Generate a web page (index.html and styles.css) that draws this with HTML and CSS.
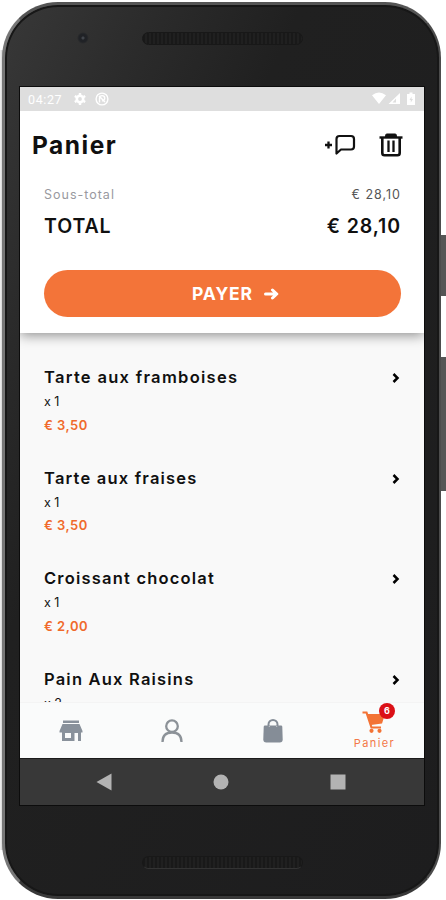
FILE: index.html
```html
<!DOCTYPE html>
<html lang="fr">
<head>
<meta charset="utf-8">
<title>Panier</title>
<link rel="stylesheet" href="styles.css">
</head>
<body>
<div class="device">
  <span class="key key-power"></span>
  <span class="key key-volume"></span>
  <div class="phone">
    <div class="bezel bezel-top"><span class="camera"></span><span class="speaker"></span></div>
    <main class="screen">
      <div class="status">
        <span class="clock">04:27</span>
        <svg class="gear" width="12" height="12" viewBox="0 0 12 12"><circle cx="6" cy="6" r="3.2" fill="none" stroke="#fff" stroke-width="2.6"/><path d="M6 0v2M6 10v2M.8 3l1.7 1M9.5 8l1.7 1M.8 9l1.7-1M9.5 4l1.7-1" stroke="#fff" stroke-width="2.4"/></svg>
        <svg class="disc" width="14" height="14" viewBox="0 0 14 14" fill="none" stroke="#fff"><circle cx="7" cy="7" r="5.9" stroke-width="1.4"/><path d="M4.5 10.5V6.2a2.6 2.6 0 1 1 2.6 2.6M4 4l6 6" stroke-width="1.4"/></svg>
        <svg class="signals" width="44" height="14" viewBox="0 0 44 14" fill="#fff"><path d="M0 3.2Q7-2 14 3.2L7 12zM28 1v11H16.500z"/><path d="M24 6.500v4h-3.500z" fill="#dedede"/><path d="M36 2h1.500V.5h3V2H43v11h-8V2z"/><path d="M39.500 4.500 37.500 8h1.300v2.500L41 7h-1.500z" fill="#dedede"/></svg>
      </div>
      <header class="summary">
        <div class="titlebar">
          <h1>Panier</h1>
          <svg class="note" width="32" height="22" viewBox="0 0 32 22" fill="none" stroke="#111"><path d="M1 11h7M4.500 7.500v7" stroke-width="2.300"/><path d="M12.500 19.500V5q0-3 3-3H27q3 0 3 3v7.500q0 3-3 3H17z" stroke-width="2.200" stroke-linejoin="round"/></svg>
          <svg class="trash" width="24" height="24" viewBox="0 0 24 24" fill="none" stroke="#111"><path d="M.5 4.500h23" stroke-width="2.400"/><path d="M6.500 4V2.500Q6.500 1 8 1h8q1.500 0 1.500 1.500V4z" fill="#111"/><path d="M3.300 5v15q0 2.200 2.200 2.200h13q2.200 0 2.200-2.200V5" stroke-width="2.600"/><path d="M9.500 7.500v11.500M14.500 7.500v11.500" stroke-width="2.300"/></svg>
        </div>
        <div class="line subtotal"><span>Sous-total</span><span class="amount">€ 28,10</span></div>
        <div class="line total"><span>TOTAL</span><span class="amount">€ 28,10</span></div>
        <button class="pay"><span>PAYER</span><svg width="15" height="12" viewBox="0 0 15 12" fill="none" stroke="#fff" stroke-width="3" stroke-linecap="round" stroke-linejoin="round"><path d="M1.500 6h11M8.500 2 12.800 6l-4.300 4"/></svg></button>
      </header>
      <section class="list">
        <article class="item"><h2 class="n1">Tarte aux framboises</h2><p class="qty">x 1</p><p class="price">€ 3,50</p><svg class="chev" width="8" height="12" viewBox="0 0 8 12"><path d="m1.500 2 4 4-4 4" fill="none" stroke="#000" stroke-width="2.500"/></svg></article>
        <article class="item"><h2 class="n2">Tarte aux fraises</h2><p class="qty">x 1</p><p class="price">€ 3,50</p><svg class="chev" width="8" height="12" viewBox="0 0 8 12"><path d="m1.500 2 4 4-4 4" fill="none" stroke="#000" stroke-width="2.500"/></svg></article>
        <article class="item"><h2 class="n3">Croissant chocolat</h2><p class="qty">x 1</p><p class="price">€ 2,00</p><svg class="chev" width="8" height="12" viewBox="0 0 8 12"><path d="m1.500 2 4 4-4 4" fill="none" stroke="#000" stroke-width="2.500"/></svg></article>
        <article class="item"><h2 class="n4">Pain Aux Raisins</h2><p class="qty">x 2</p><svg class="chev" width="8" height="12" viewBox="0 0 8 12"><path d="m1.500 2 4 4-4 4" fill="none" stroke="#000" stroke-width="2.500"/></svg></article>
      </section>
      <nav class="tabs">
        <span class="tab"><svg width="24" height="22" viewBox="0 0 24 22" fill="#89919b"><path d="M4 .5h16V3H4zM3.500 4h17l3 7v1.500H22V21h-3v-8h-3.500v8H3v-8.500H.5V11zM6 13v5h6v-5z" fill-rule="evenodd"/></svg></span>
        <span class="tab"><svg width="22" height="24" viewBox="0 0 22 24" fill="none" stroke="#8c9298" stroke-width="2.300"><circle cx="11" cy="7.200" r="5.800"/><path d="M1.500 23q0-9.500 9.500-9.500T20.500 23"/></svg></span>
        <span class="tab"><svg width="20" height="24" viewBox="0 0 20 24"><path d="M5.500 8V5.500a4.500 4.500 0 0 1 9 0V8" fill="none" stroke="#858d97" stroke-width="2"/><path d="M2 6.500h16q1.200 0 1.300 1.300l.4 12.700q0 3-3 3H3.300q-3 0-3-3L.7 7.800Q.8 6.500 2 6.500z" fill="#858d97"/><path d="M6.300 7v1M13.700 7v1" stroke="#c3c8cd"/></svg></span>
        <span class="tab active"><span class="cart"><svg width="24" height="22" viewBox="0 0 24 22"><path d="M.5 1.500h4L9.500 16.500h9.500" fill="none" stroke="#f37335" stroke-width="2.200"/><path d="M5.500 3H23l-3 9.500-11 1.500z" fill="#f37335"/><circle cx="9.500" cy="19.800" r="2.100" fill="#f37335"/><circle cx="17.500" cy="19.800" r="2.100" fill="#f37335"/></svg><span class="badge">6</span></span><span class="label">Panier</span></span>
      </nav>
      <div class="system">
        <svg width="16" height="18" viewBox="0 0 16 18"><path d="M15.500.5v17L.5 9z" fill="#b3b3b3"/></svg>
        <svg width="16" height="16" viewBox="0 0 16 16"><circle cx="8" cy="8" r="7.500" fill="#b3b3b3"/></svg>
        <svg width="16" height="16" viewBox="0 0 16 16"><path d="M.5.500h15v15H.5z" fill="#b3b3b3"/></svg>
      </div>
    </main>
    <div class="bezel bezel-bottom"><span class="speaker"></span></div>
  </div>
</div>
</body>
</html>
```
FILE: styles.css
```css
* { box-sizing: border-box; }
body { margin: 0; background: #fff; font-family: Inter, "Liberation Sans", sans-serif; color: #101010; }
h1, h2, p { margin: 0; white-space: nowrap; }
svg { display: block; flex: none; }
.device { position: relative; width: 446px; height: 900px; padding: 2px 5px 1px 2px; overflow: hidden; background: linear-gradient(90deg, #f4f4f4 0, #b5b5b5 4px, transparent 5px) 0 50px / 7px 800px no-repeat; }
.key { position: absolute; right: 0; width: 6px; background: #555; }
.key-power { top: 235px; height: 61px; }
.key-volume { top: 357px; height: 134px; }
.phone { position: relative; height: 897px; border-radius: 56px; padding: 0 14px 0 14px; border: 3px solid #4c4c4c; border-top-color: #555; border-left-color: #777; border-right-width: 2px; border-bottom-color: #393939; background: linear-gradient(115deg, #383838 0, #2b2b2b 18%, #202020 35%, #1d1d1e 100%); box-shadow: inset 0 0 0 2px #171717; }
.bezel { display: flex; position: relative; justify-content: center; }
.bezel-top { height: 82px; padding-top: 27px; }
.bezel-bottom { height: 91px; padding-top: 51px; }
.speaker { width: 161px; height: 13px; border-radius: 7px; border: 1px solid #181818; background: repeating-linear-gradient(90deg, #191919 0 2px, #202020 2px 4px); }
.bezel-bottom .speaker { border-bottom-color: #333; }
.camera { position: absolute; left: 58px; top: 27px; width: 12px; height: 12px; border-radius: 50%; background: radial-gradient(circle, #41454b 0 1px, #202226 2px 4px, #303030 6px); }
.screen { display: flex; flex-direction: column; width: 404px; margin-left: 1px; height: 718px; background: #f9f9f9; outline: 1px solid #0c0c0c; overflow: hidden; }
.status { position: relative; z-index: 2; display: flex; align-items: center; flex: none; height: 24px; background: #dedede; padding: 0 8px; }
.clock { width: 46px; font: 12.5px Roboto, sans-serif; letter-spacing: .6px; color: #fff; }
.disc { margin-left: 9px; }
.signals { margin-left: auto; }
.summary { position: relative; z-index: 1; flex: none; height: 222px; padding: 0 24px; background: #fff; box-shadow: 0 2px 12px rgba(0,0,0,.45); }
.titlebar { display: flex; align-items: center; height: 68px; margin: 0 -3px 0 -12px; }
h1 { font-size: 24.5px; font-weight: 700; letter-spacing: 1.5px; }
.note { margin-left: auto; margin-right: 23px; }
.line { display: flex; justify-content: space-between; align-items: center; white-space: nowrap; }
.subtotal { height: 30px; font-size: 12.5px; letter-spacing: 1px; color: #9999a0; }
.amount { margin-right: -1px; }
.subtotal .amount { color: #555; }
.total { height: 33px; font-size: 19.5px; font-weight: 600; letter-spacing: .9px; }
.pay { display: flex; align-items: center; justify-content: center; gap: 11px; width: 357px; height: 47px; margin-top: 28px; border: 0; border-radius: 24px; padding: 0 0 0 26px; color: #fff; background: #f37439; font: 700 17.5px Inter, sans-serif; letter-spacing: .9px; }
.list { flex: 1; min-height: 0; overflow: hidden; padding: 32px 24px 0; }
.item { display: grid; grid-template-columns: 1fr 8px; grid-template-rows: 24px 25px 21px; height: 100.5px; align-items: center; }
.item .chev { grid-column: 2; grid-row: 1; position: relative; top: 1px; }
h2 { font-size: 16.5px; font-weight: 600; letter-spacing: 1.2px; }
.n1 { letter-spacing: 1.3px; }
.item p { grid-column: 1; }
.qty { font-size: 12.5px; }
.price { font-size: 13px; font-weight: 600; letter-spacing: .5px; color: #f06a2b; }
.tabs { display: grid; grid-template-columns: repeat(4, 1fr); flex: none; height: 56px; border-top: 1px solid #f4f4f4; background: #fafbfb; }
.tab { display: flex; align-items: center; justify-content: center; }
.active { flex-direction: column; gap: 4px; padding-left: 1px; color: #f37848; }
.cart { position: relative; }
.badge { position: absolute; left: 17px; top: -8px; width: 16px; height: 16px; border-radius: 50%; background: #db1016; color: #fff; font-size: 9px; line-height: 16px; font-weight: 700; text-align: center; }
.label { font-size: 11px; line-height: 13px; letter-spacing: 1.4px; margin-right: -1px; }
.system { display: flex; align-items: center; justify-content: space-between; flex: none; height: 47px; padding: 0 78px 0 76px; background: #383838; border-top: 1px solid #1b1b1b; }
```
